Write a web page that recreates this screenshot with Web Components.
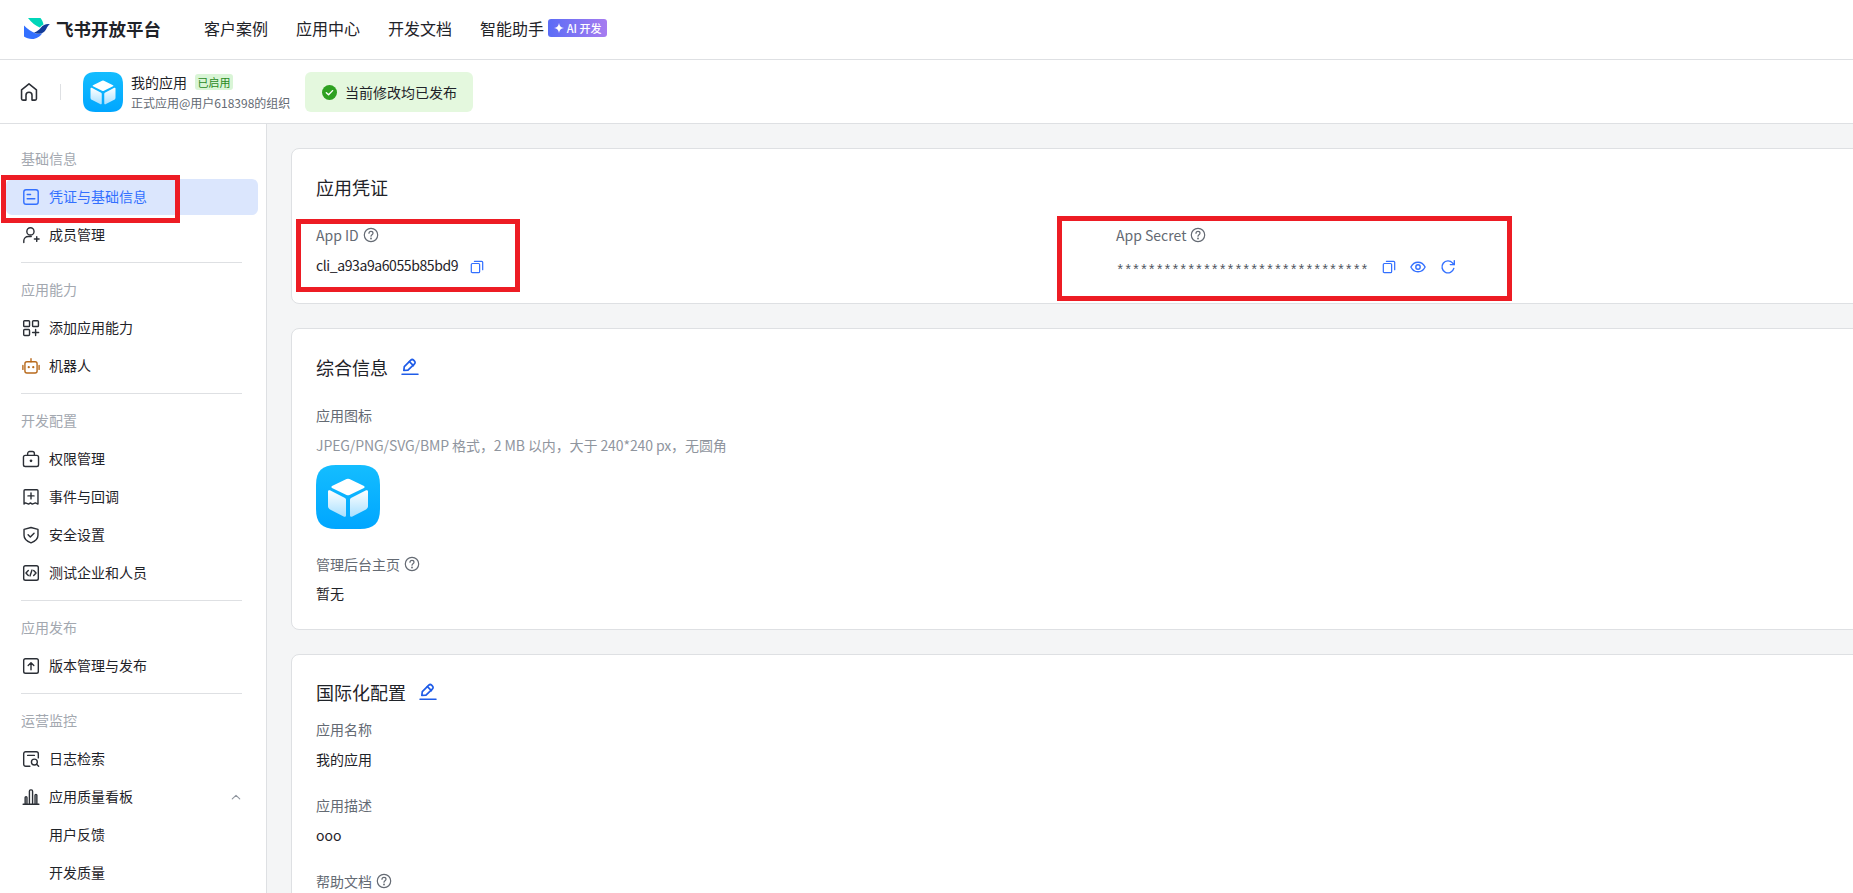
<!DOCTYPE html>
<html lang="zh"><head><meta charset="utf-8"><title>飞书开放平台</title>
<style>
html,body{margin:0;height:100%;overflow:hidden;background:#fff}
body{font-family:"Noto Sans CJK SC","Noto Sans",sans-serif;font-size:14px;color:#1f2329}
</style></head>
<body>
<app-shell>
  <top-nav slot="top"></top-nav>
  <sub-header slot="sub"></sub-header>
  <side-bar slot="side">
    <nav-group label="基础信息">
      <nav-item icon="card" active>凭证与基础信息</nav-item>
      <nav-item icon="member">成员管理</nav-item>
    </nav-group>
    <nav-group label="应用能力">
      <nav-item icon="apps">添加应用能力</nav-item>
      <nav-item icon="robot">机器人</nav-item>
    </nav-group>
    <nav-group label="开发配置">
      <nav-item icon="lock">权限管理</nav-item>
      <nav-item icon="event">事件与回调</nav-item>
      <nav-item icon="shield">安全设置</nav-item>
      <nav-item icon="code">测试企业和人员</nav-item>
    </nav-group>
    <nav-group label="应用发布">
      <nav-item icon="upload">版本管理与发布</nav-item>
    </nav-group>
    <nav-group label="运营监控" last>
      <nav-item icon="log">日志检索</nav-item>
      <nav-item icon="chart" expand>应用质量看板</nav-item>
      <nav-item>用户反馈</nav-item>
      <nav-item>开发质量</nav-item>
    </nav-group>
  </side-bar>
  <info-card slot="main" heading="应用凭证" style="--title-gap:24px;--pad-bottom:25px;margin-top:24px">
    <div style="display:grid;grid-template-columns:800px 1fr">
      <info-field label="App ID" help><span style="letter-spacing:-.4px">cli_a93a9a6055b85bd9</span><row-actions actions="copy"></row-actions></info-field>
      <info-field label="App Secret" help><span style="font-family:'Liberation Mono',monospace;font-size:14px;line-height:1;vertical-align:-4px;color:#4e5560;letter-spacing:-.52px">********************************</span><row-actions actions="copy eye refresh" style="margin-left:14px"></row-actions></info-field>
    </div>
  </info-card>
  <info-card slot="main" heading="综合信息" editable style="--title-gap:24px;--pad-bottom:25px">
    <info-field label="应用图标" style="--value-gap:8px">
      <span style="display:block;color:#8f959e;margin-bottom:9px;line-height:22px;letter-spacing:-.1px">JPEG/PNG/SVG/BMP 格式，2 MB 以内，大于 240*240 px，无圆角</span>
      <app-logo size="64"></app-logo>
    </info-field>
    <info-field label="管理后台主页" help style="margin-top:24px;--value-gap:7px">暂无</info-field>
  </info-card>
  <info-card slot="main" heading="国际化配置" editable style="--title-gap:13px;--pad-top:24px">
    <info-field label="应用名称">我的应用</info-field>
    <info-field label="应用描述" style="margin-top:24px">ooo</info-field>
    <info-field label="帮助文档" help style="margin-top:24px"></info-field>
  </info-card>
  <mark-box slot="marks" style="left:1px;top:175px;width:179px;height:48px"></mark-box>
  <mark-box slot="marks" style="left:296px;top:219px;width:224px;height:73px"></mark-box>
  <mark-box slot="marks" style="left:1057px;top:216px;width:455px;height:85px"></mark-box>
</app-shell>
<script>
const ICONS={
 card:'<rect x="1.6" y="1.6" width="12.8" height="12.8" rx="2"/><path d="M4.6 5.8h3M4.6 9.6h6.8"/>',
 member:'<circle cx="7.5" cy="4.8" r="3.2"/><path d="M1.6 14.6v-1.4c0-2.2 1.8-3.9 4-3.9h2.6M11 11.6h4.2M13.1 9.5v4.2"/>',
 apps:'<rect x="1.5" y="1.5" width="5.2" height="5.2" rx=".8"/><rect x="9.4" y="1.5" width="5.2" height="5.2" rx=".8"/><rect x="1.5" y="9.4" width="5.2" height="5.2" rx=".8"/><path d="M9.4 12h5.4M12.1 9.3v5.4"/>',
 robot:'<g stroke="#b86a1d"><rect x="2.6" y="4.2" width="10.8" height="10" rx="1.8"/><path d="M8 1.6v2.6M.8 7.6v3.4M15.2 7.6v3.4"/><path d="M6 9h.01M10 9h.01" stroke-width="2"/></g>',
 lock:'<rect x="1.3" y="4.8" width="13.4" height="9.8" rx="1.6"/><path d="M5 4.8V3.2c0-1 .8-1.8 1.8-1.8h2.4c1 0 1.8.8 1.8 1.8v1.6"/><path d="M8 9.6h.01" stroke-width="2.4"/>',
 event:'<path d="M1.8 2.4c0-.5.4-.9.9-.9h10.6c.5 0 .9.4.9.9v11.9l-2.3-1.100-2.800 1.100-1.600-1-1.600 1-2.800-1.100-1.300 1.100z"/><path d="M5.3 7h5.4M8 4.300v5.400"/>',
 shield:'<path d="M8 1.3 14.2 3v5.300c0 3.200-2.600 5.400-6.200 6.700-3.600-1.300-6.200-3.500-6.200-6.700V3z"/><path d="m5.4 7.800 2 2 3.300-3.300"/>',
 code:'<rect x="1.5" y="1.5" width="13" height="13" rx="1.6"/><path d="M5.6 5.800 3.500 8l2.100 2.200M10.400 5.800 12.500 8l-2.100 2.200M8.900 5.400 7.100 10.600"/>',
 upload:'<rect x="1.5" y="1.5" width="13" height="13" rx="1.6"/><path d="M8 11.300V5.200M5.500 7.500 8 5l2.500 2.500"/>',
 log:'<path d="M7 14.500H3.300c-1 0-1.800-.8-1.800-1.800V3.300c0-1 .8-1.800 1.800-1.800h9.400c1 0 1.800.8 1.800 1.800v3.700M5 4.800h6"/><circle cx="11" cy="10.700" r="2.600"/><path d="m13 12.700 1.800 1.800"/>',
 chart:'<path d="M1 14.500h14M2.800 14.500V8.500c0-.5.300-.8.800-.8s.8.300.8.800v6M6.600 14.500V2.800c0-.6.500-1.100 1.100-1.100h.6c.6 0 1.100.5 1.100 1.100v11.700M11.600 14.500V6.500c0-.5.300-.8.800-.8s.8.300.8.800v8"/>',
 chevron:'<path d="M3 10.500 8 5.800l5 4.700"/>',
 home:'<path d="M2.3 7.100 9 1.700l6.700 5.400v8c0 .7-.5 1.200-1.200 1.200h-2.800v-4.400c0-1.400-1.200-2.600-2.700-2.600s-2.700 1.200-2.700 2.600v4.400H3.500c-.7 0-1.200-.5-1.200-1.200z"/>',
 help:'<circle cx="8" cy="8" r="6.7"/><path d="M6 6.300c0-1.100.9-1.900 2-1.900s2 .8 2 1.800c0 1.500-2 1.500-2 3"/><path d="M8 11.500h.01" stroke-width="1.800"/>',
 copy:'<rect x="1.5" y="4" width="9.5" height="10.500" rx="1.2"/><path d="M5 1.500h8.300c.6 0 1.200.5 1.200 1.200V11"/>',
 eye:'<path d="M.9 8C2.500 4.800 5 3.200 8 3.200s5.500 1.600 7.100 4.800c-1.600 3.200-4.100 4.800-7.100 4.800S2.500 11.200.9 8z"/><circle cx="8" cy="8" r="2.200"/>',
 refresh:'<path d="M13.800 9.400A6 6 0 1 1 12.500 3.900l1.700 1.600"/><path d="M14.300 1.600v4h-4"/>',
 edit:'<path d="M2.800 12.500 3.300 8.700 9.800 2.200c.8-.8 2-.8 2.800 0l.9.900c.8.800.8 2 0 2.800L7 12.200z"/><path d="m8.400 3.700 4 4"/><path d="M1 16.300h16" stroke-width="1.500"/>'
};
function base(css,html){return `<style>${css}</style>${html}`}

customElements.define('x-icon',class extends HTMLElement{
  connectedCallback(){
    const s=this.getAttribute('size')||16,v=this.getAttribute('view')||16,w=this.getAttribute('stroke-w')||1.3;
    this.attachShadow({mode:'open'}).innerHTML=base(
      `:host{display:inline-flex;flex:none;width:${s}px;height:${s}px;color:inherit}svg{display:block;width:100%;height:100%;fill:none;stroke:currentColor;stroke-width:${w};stroke-linecap:round;stroke-linejoin:round}`,
      `<svg viewBox="0 0 ${v} ${v}">${ICONS[this.getAttribute('name')]||''}</svg>`);
  }
});

customElements.define('app-logo',class extends HTMLElement{
  connectedCallback(){
    const s=+this.getAttribute('size')||40;
    const id='g'+s;
    this.attachShadow({mode:'open'}).innerHTML=base(
      `:host{display:block;flex:none;width:${s}px;height:${s}px}svg{display:block;width:100%;height:100%}`,
      `<svg viewBox="0 0 64 64"><defs>
        <linearGradient id="${id}b" x1="0" y1="0" x2="0" y2="1"><stop offset="0" stop-color="#14bdff"/><stop offset="1" stop-color="#00a6ff"/></linearGradient>
        <linearGradient id="${id}f" x1="0" y1="0" x2="0" y2="1"><stop offset="0" stop-color="#fff"/><stop offset="1" stop-color="#a9e0ff"/></linearGradient></defs>
        <path d="M20 0h24C58 0 64 6 64 20v24c0 14-6 20-20 20H20C6 64 0 58 0 44V20C0 6 6 0 20 0z" fill="url(#${id}b)"/>
        <path d="M30.500 14a3.500 3.500 0 0 1 3 0l14.500 7c.8.400.8 1.500 0 1.900l-14.500 7a3.500 3.500 0 0 1-3 0L16 22.900c-.8-.400-.8-1.500 0-1.900z" fill="#fff"/>
        <path d="M12 26.500c0-1 1-1.600 1.900-1.200L29 33c.6.300 1 .900 1 1.600V50.500c0 1-1 1.600-1.900 1.200L14 44.500c-1.200-.7-2-1.800-2-3.200z" fill="url(#${id}f)"/>
        <path d="M52 26.500c0-1-1-1.600-1.900-1.200L35 33c-.6.300-1 .900-1 1.600V50.500c0 1 1 1.600 1.900 1.200L50 44.500c1.200-.7 2-1.800 2-3.200z" fill="url(#${id}f)"/>
      </svg>`);
  }
});

customElements.define('app-shell',class extends HTMLElement{
  constructor(){super();this.attachShadow({mode:'open'}).innerHTML=base(
   `:host{display:grid;position:relative;width:100%;height:893px;overflow:hidden;grid-template-columns:267px 1fr;grid-template-rows:60px 64px 1fr}
    .top{grid-column:1/3}.sub{grid-column:1/3}
    main{background:#f4f5f6;padding:0 0 0 24px;overflow:hidden;width:1700px;min-height:0}
    aside{overflow:hidden;min-height:0}`,
   `<div class="top"><slot name="top"></slot></div><div class="sub"><slot name="sub"></slot></div>
    <aside><slot name="side"></slot></aside><main><slot name="main"></slot></main><slot name="marks"></slot>`);}
});

customElements.define('top-nav',class extends HTMLElement{
  constructor(){super();this.attachShadow({mode:'open'}).innerHTML=base(
   `:host{display:flex;align-items:center;height:60px;box-sizing:border-box;border-bottom:1px solid #dee0e3;background:#fff;padding-left:24px}
    .logo{width:26px;height:21px;flex:none;margin-bottom:2px}
    .brand{font-size:17.5px;font-weight:700;margin-left:6px;color:#1f2329;width:148px;line-height:24px;padding-bottom:2px}
    a{font-size:16px;color:#1f2329;line-height:24px;margin-right:28px;white-space:nowrap;text-decoration:none;padding-bottom:4px}
    a.last{margin-right:4px}
    .ai{display:inline-flex;align-items:center;gap:3px;height:18px;padding:0 4px;width:51px;justify-content:center;border-radius:3px;color:#fff;font-size:11px;font-weight:500;background:linear-gradient(90deg,#5a6cf6,#a77cf0);margin-top:-3px}
    .ai svg{width:10px;height:10px;fill:#fff}`,
   `<svg class="logo" viewBox="0 0 26 21">
      <path d="M4 0h12.500c1.500 2 2.500 4 3 6.500-1.500.7-2.700 1.700-3.700 3C12 8 7.500 4.500 4 0z" fill="#00d6b9"/>
      <path d="M0 7.500C3.500 11 7.500 14 12 15.500c3 .9 5 .4 6.500-.5C16 18.500 12.500 21 8 21c-3 0-6-1-8-2.500z" fill="#3370ff"/>
      <path d="M10 14.500c3-1 5-2.500 7-5 2-2.800 5-4 9-3.500-1.500 1-2.500 2.500-3.500 4.500-1.200 2.500-3 4.300-5.500 5-2.500.6-5 .3-7-1z" fill="#133c9a"/>
    </svg>
    <span class="brand">飞书开放平台</span>
    <a>客户案例</a><a>应用中心</a><a>开发文档</a><a class="last">智能助手</a>
    <span class="ai"><svg viewBox="0 0 10 10"><path d="M5 0c.5 3 1.800 4.500 5 5-3.200.5-4.500 2-5 5-.5-3-1.800-4.500-5-5 3.200-.5 4.500-2 5-5z"/></svg>AI 开发</span>`);}
});

customElements.define('sub-header',class extends HTMLElement{
  constructor(){super();this.attachShadow({mode:'open'}).innerHTML=base(
   `:host{display:flex;align-items:center;height:64px;box-sizing:border-box;border-bottom:1px solid #dee0e3;background:#fff;padding-left:19px;padding-top:1px}
    .sep{width:1px;height:16px;background:#dee0e3;margin:0 22px 0 21px}
    .meta{margin-left:8px;width:174px;display:flex;flex-direction:column;gap:1px}
    .name{display:flex;align-items:center;gap:8px;line-height:20px;font-size:14px;color:#1f2329;height:20px}
    .tag{font-size:11px;line-height:16px;height:16px;width:38px;text-align:center;color:#2a8a1e;background:#d9f5d6;border-radius:3px}
    .org{font-size:12px;line-height:20px;color:#646a73;white-space:nowrap}
    .ok{display:flex;align-items:center;gap:8px;height:40px;width:168px;box-sizing:border-box;padding-left:17px;background:#e4f8de;border-radius:6px;font-size:14px;color:#1f2329;white-space:nowrap}
    .ok svg{width:15px;height:15px;flex:none}`,
   `<x-icon name="home" size="20" view="18" stroke-w="1.400" style="color:#2b2f36"></x-icon><span class="sep"></span>
    <app-logo size="40"></app-logo>
    <div class="meta"><div class="name">我的应用<span class="tag">已启用</span></div><div class="org">正式应用@用户618398的组织</div></div>
    <div class="ok"><svg viewBox="0 0 16 16"><circle cx="8" cy="8" r="8" fill="#2ea121"/><path d="m4.6 8.200 2.400 2.300 4.300-4.500" fill="none" stroke="#fff" stroke-width="1.500" stroke-linecap="round" stroke-linejoin="round"/></svg>当前修改均已发布</div>`);}
});

customElements.define('side-bar',class extends HTMLElement{
  constructor(){super();this.attachShadow({mode:'open'}).innerHTML=base(
   `:host{display:block;box-sizing:border-box;height:100%;width:267px;background:#fff;border-right:1px solid #dee0e3;padding-top:24px;overflow:hidden}`,`<slot></slot>`);}
});

customElements.define('nav-group',class extends HTMLElement{
  connectedCallback(){
    this.attachShadow({mode:'open'}).innerHTML=base(
   `:host{display:block}
    .t{margin:0 0 11px 21px;font-size:14px;line-height:20px;color:#a3a8b0}
    .list{display:flex;flex-direction:column;gap:2px}
    hr{border:0;height:1px;background:#dee0e3;margin:9px 24px 16px 21px}`,
   `<div class="t">${this.getAttribute('label')}</div><div class="list"><slot></slot></div>${this.hasAttribute('last')?'':'<hr>'}`);
  }
});

customElements.define('nav-item',class extends HTMLElement{
  connectedCallback(){
    const ic=this.getAttribute('icon'),active=this.hasAttribute('active');
    this.attachShadow({mode:'open'}).innerHTML=base(
   `:host{display:flex;align-items:center;height:36px;margin:0 8px 0 6px;padding-left:${ic?16:43}px;gap:9px;border-radius:6px;font-size:14px;line-height:22px;color:${active?'#3370ff':'#1f2329'};background:${active?'#dbe6fd':'transparent'};position:relative;white-space:nowrap}
    span{padding-bottom:2px}
    x-icon{color:${active?'#3370ff':'#2b2f36'}}
    .chev{margin-left:auto;margin-right:16px;color:#8f959e}`,
   `${ic?`<x-icon name="${ic}" size="18" stroke-w="1.250"></x-icon>`:''}<span><slot></slot></span>${this.hasAttribute('expand')?'<x-icon class="chev" name="chevron" size="12" stroke-w="1.500"></x-icon>':''}`);
  }
});

customElements.define('info-card',class extends HTMLElement{
  connectedCallback(){
    this.attachShadow({mode:'open'}).innerHTML=base(
   `:host{display:block;box-sizing:border-box;width:1660px;background:#fff;border:1px solid #dee0e3;border-radius:8px;padding:var(--pad-top,25px) 24px var(--pad-bottom,24px);margin-bottom:24px}
    h2{display:flex;align-items:center;gap:13px;margin:0 0 var(--title-gap,24px);font-weight:400;font-size:18px;line-height:26px;color:#1f2329}
    x-icon{color:#1f5ce8}`,
   `<h2>${this.getAttribute('heading')}${this.hasAttribute('editable')?'<x-icon name="edit" size="18" view="18" stroke-w="1.700"></x-icon>':''}</h2><slot></slot>`);
  }
});

customElements.define('info-field',class extends HTMLElement{
  connectedCallback(){
    this.attachShadow({mode:'open'}).innerHTML=base(
   `:host{display:block}
    .l{display:flex;align-items:center;gap:4px;color:#646a73;font-size:14px;line-height:22px;margin-bottom:var(--value-gap,8px)}
    x-icon{color:#646a73}
    .v{line-height:22px;color:#1f2329;font-size:14px}`,
   `<div class="l">${this.getAttribute('label')}${this.hasAttribute('help')?'<x-icon name="help" size="16" stroke-w="1.200"></x-icon>':''}</div><div class="v"><slot></slot></div>`);
  }
});

customElements.define('row-actions',class extends HTMLElement{
  connectedCallback(){
    const a=this.getAttribute('actions').split(' ');
    this.attachShadow({mode:'open'}).innerHTML=base(
   `:host{display:inline-flex;align-items:center;gap:14px;margin-left:12px;vertical-align:-3px;color:#3370ff}`,
   a.map(n=>`<x-icon name="${n}" size="${n==='copy'?14:16}" stroke-w="1.400"></x-icon>`).join(''));
  }
});

customElements.define('mark-box',class extends HTMLElement{
  constructor(){super();this.attachShadow({mode:'open'}).innerHTML=base(
   `:host{position:absolute;box-sizing:border-box;border:5px solid #ed1c24;pointer-events:none}`,``);}
});
</script>
</body></html>
